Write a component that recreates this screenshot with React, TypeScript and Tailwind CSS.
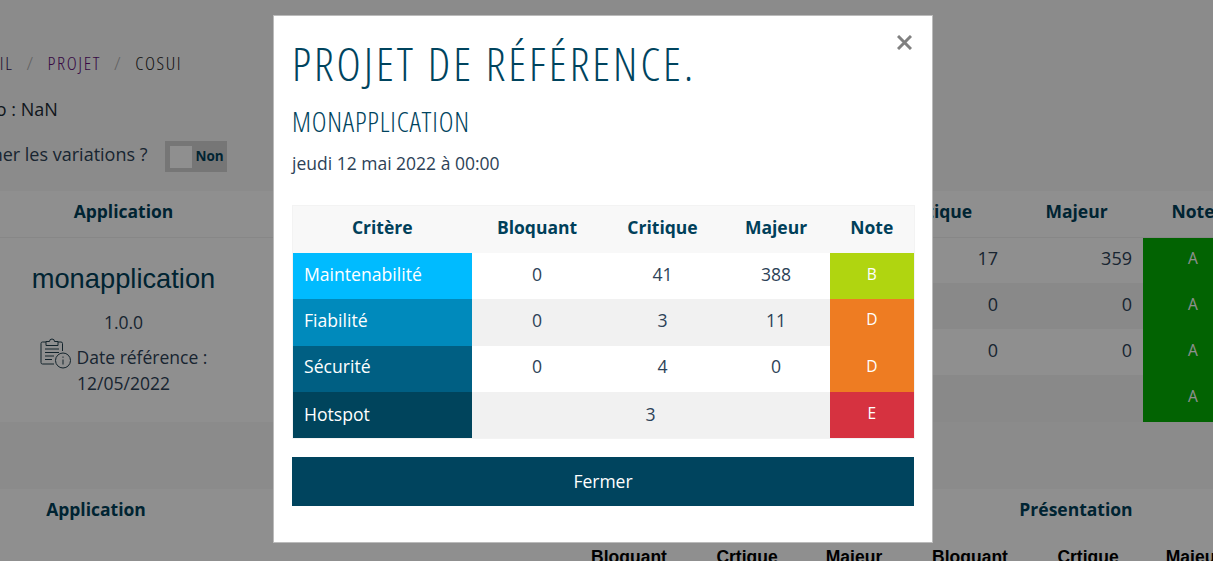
import React from 'react';

const body = { fontFamily: '"Open Sans", sans-serif' };
const hand = { fontFamily: '"Open Sans", sans-serif', fontStretch: '75%' };

const modalRows = [
  { label: 'Maintenabilité', color: 'bg-[#00bbff]', cells: [0, 41, 388], note: 'B', noteColor: 'bg-[#b0d510]', stripe: 'bg-white', h: 'h-[46px]', pad: 'pb-[2px]' },
  { label: 'Fiabilité', color: 'bg-[#008abc]', cells: [0, 3, 11], note: 'D', noteColor: 'bg-[#ee7c22]', stripe: 'bg-[#f1f1f1]', h: 'h-[47px]', pad: 'pb-[4px]' },
  { label: 'Sécurité', color: 'bg-[#005f83]', cells: [0, 4, 0], note: 'D', noteColor: 'bg-[#ee7c22]', stripe: 'bg-white', h: 'h-[46px]', pad: 'pb-[4px]' },
];

const backRows = [
  { critique: '17', majeur: '359', stripe: 'bg-white', h: 'h-[46px]' },
  { critique: '0', majeur: '0', stripe: 'bg-[#f4f4f4]', h: 'h-[46px]' },
  { critique: '0', majeur: '0', stripe: 'bg-white', h: 'h-[46px]' },
  { critique: '', majeur: '', stripe: 'bg-[#f4f4f4]', h: 'h-[47px]' },
];

const subHeaders = [
  { label: 'Bloquant', w: 'w-[108px]' },
  { label: 'Crtique', w: 'w-[128px]' },
  { label: 'Majeur', w: 'w-[86px]' },
  { label: 'Bloquant', w: 'w-[146px]' },
  { label: 'Crtique', w: 'w-[90px]' },
  { label: 'Majeur', w: 'w-[122px]' },
];

const ClipboardInfo = () => (
  <svg width="32" height="31" viewBox="0 0 32 31" fill="none" stroke="#23404f" strokeWidth="1" className="mr-[5px] inline-block align-[-5px]">
    <path d="M6 4H2.500A1.500 1.500 0 0 0 1 5.500V24.500A1.500 1.500 0 0 0 2.500 26H14" />
    <path d="M18 4h3a1.500 1.500 0 0 1 1.500 1.500V13" />
    <path d="M6 3.500h3.500a2.500 2.500 0 0 1 5 0H18V7.500H6z" />
    <path d="M5 11h14M5 14.500h14M5 18h9M5 21.500h7" />
    <circle cx="23" cy="22.500" r="7.500" />
    <path d="M23 21.500v5M23 18.500v1.300" />
  </svg>
);

const App = () => {
  return (
    <div className="relative h-[561px] w-[1213px] overflow-hidden bg-[#f8f8f8] text-[#2d4257]" style={body}>
      <div className="w-[1260px] pt-[50px]">
        <div className="-ml-[49px] flex h-[27px] items-center gap-[13px] text-[19px] font-light tracking-[1.600px] whitespace-nowrap" style={hand}>
          <span className="text-[#3a1a5c]">ACCUEIL</span>
          <span className="text-[#aaa]">/</span>
          <span className="text-[#64107a]">PROJET</span>
          <span className="text-[#aaa]">/</span>
          <span className="text-[#222]">COSUI</span>
        </div>
        <div className="-ml-[63px] mt-[20px] h-[24px] text-[18px] leading-[24px] whitespace-nowrap text-[#1c2a35]">Numéro : NaN</div>
        <div className="-ml-[45px] mt-[20px] flex h-[31px] items-center gap-[18px] text-[18px] whitespace-nowrap">
          <span className="pb-[4px]">Afficher les variations ?</span>
          <div className="flex h-[31px] w-[62px] items-center bg-[#d3d3d3] pl-[5px]">
            <div className="h-[22px] w-[22px] bg-white"></div>
            <span className="ml-[3px] text-[13.500px] font-bold text-[#00405a]">Non</span>
          </div>
        </div>

        <table className="mt-[19px] table-fixed border-collapse" style={{ width: 1243 }}>
          <colgroup>
            <col className="w-[247px]" />
            <col className="w-[40px]" />
            <col className="w-[577px]" />
            <col className="w-[146px]" />
            <col className="w-[133px]" />
            <col className="w-[100px]" />
          </colgroup>
          <thead>
            <tr className="h-[46px] border-b border-[#f0f0f0] bg-white text-[17.500px] font-bold text-[#00405a]">
              <th className="pb-[6px]">Application</th>
              <th colSpan={2}></th>
              <th className="pb-[6px]">Critique</th>
              <th className="pb-[6px]">Majeur</th>
              <th className="pb-[6px]">Note</th>
            </tr>
          </thead>
          <tbody>
            {backRows.map((row, index) => (
              <tr key={index} className={row.h}>
                {index === 0 && (
                  <td rowSpan={4} colSpan={2} className="bg-white align-top">
                    <div className="w-[247px] text-center">
                      <div className="pt-[26px] text-[27.300px] leading-[30px] text-[#00405a]" style={{ fontFamily: '"Liberation Sans", sans-serif' }}>
                        monapplication
                      </div>
                      <div className="mt-[16px] text-[17.500px] leading-[24px]">1.0.0</div>
                      <div className="mt-[4px] text-[17.500px] leading-[26px] whitespace-nowrap">
                        <ClipboardInfo />
                        Date référence :
                        <br />
                        12/05/2022
                      </div>
                    </div>
                  </td>
                )}
                <td className={row.stripe}></td>
                <td className={`${row.stripe} pr-[12px] pb-[3px] text-right text-[18px]`}>{row.critique}</td>
                <td className={`${row.stripe} pr-[11px] pb-[3px] text-right text-[18px]`}>{row.majeur}</td>
                <td className="bg-[#05b105] pb-[3px] text-center text-[15.500px] text-white">A</td>
              </tr>
            ))}
          </tbody>
        </table>

        <div className="mt-[67px] bg-white">
          <div className="flex h-[40px] items-center text-[17.500px] font-bold text-[#00405a]">
            <div className="w-[192px] text-center">Application</div>
            <div className="w-[705px]"></div>
            <div className="w-[358px] text-center">Présentation</div>
          </div>
          <div className="ml-[575px] flex pt-[18px] text-[17.500px] leading-[20px] font-bold text-black" style={{ fontFamily: '"Liberation Sans", sans-serif' }}>
            {subHeaders.map((item, index) => (
              <div key={index} className={`${item.w} text-center`}>{item.label}</div>
            ))}
          </div>
        </div>
      </div>

      {/* overlay + modal */}
      <div className="absolute inset-0 bg-black/44 pt-[15px] pl-[273px]">
        <div className="relative h-[528px] w-[660px] border border-[#bbb] bg-white px-[18px]">
          <svg width="15" height="15" viewBox="0 0 15 15" className="absolute top-[19px] right-[20px]" stroke="#808080" strokeWidth="3">
            <path d="M1 1l13 13M14 1L1 14" />
          </svg>

          <h1 className="pt-[22px] text-[46px] leading-[50px] font-light tracking-[3px] whitespace-nowrap text-[#00445e]" style={hand}>
            PROJET DE RÉFÉRENCE.
          </h1>
          <h2 className="mt-[15px] text-[28px] leading-[36px] font-light tracking-[0.800px] whitespace-nowrap text-[#00445e]" style={hand}>
            MONAPPLICATION
          </h2>
          <p className="mt-[11px] text-[17.500px] leading-[26px]">jeudi 12 mai 2022 à 00:00</p>

          <table className="mt-[29px] w-[622px] table-fixed border-collapse border border-[#f3f3f3]">
            <colgroup>
              <col className="w-[179px]" />
              <col className="w-[131px]" />
              <col className="w-[120px]" />
              <col className="w-[107px]" />
              <col className="w-[85px]" />
            </colgroup>
            <thead>
              <tr className="h-[47px] bg-[#f8f8f8] text-[17.500px] font-bold text-[#00405a]">
                <th className="pb-[5px]">Critère</th>
                <th className="pb-[5px]">Bloquant</th>
                <th className="pb-[5px]">Critique</th>
                <th className="pb-[5px]">Majeur</th>
                <th className="pb-[5px]">Note</th>
              </tr>
            </thead>
            <tbody className="text-center text-[17.600px]">
              {modalRows.map((row) => (
                <tr key={row.label} className={`${row.h} ${row.stripe}`}>
                  <td className={`${row.color} ${row.pad} pl-[11px] text-left text-white`}>{row.label}</td>
                  {row.cells.map((cell, index) => (
                    <td key={index} className={row.pad}>{cell}</td>
                  ))}
                  <td className={`${row.noteColor} ${row.pad} text-[15.500px] text-white`}>{row.note}</td>
                </tr>
              ))}
              <tr className="h-[47px] bg-[#f1f1f1]">
                <td className="bg-[#00445c] pb-[2px] pl-[11px] text-left text-white">Hotspot</td>
                <td colSpan={3} className="pb-[2px]">3</td>
                <td className="bg-[#d63240] pb-[2px] text-[15.500px] text-white">E</td>
              </tr>
            </tbody>
          </table>

          <button className="mt-[18px] h-[49px] w-[622px] bg-[#00445e] text-[17.500px] text-white">Fermer</button>
        </div>
      </div>
    </div>
  );
};

export default App;
